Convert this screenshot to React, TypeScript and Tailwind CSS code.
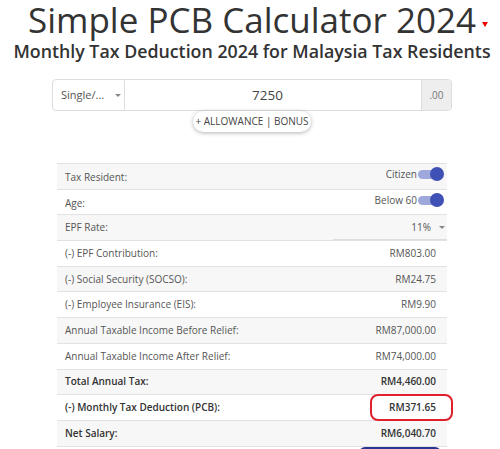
import React from "react";

type Row = {
  label: string;
  value?: string;
  kind?: "toggle" | "select" | "plain";
  bold?: boolean;
  boxed?: boolean;
};

const rows: Row[] = [
  { label: "Tax Resident:", value: "Citizen", kind: "toggle" },
  { label: "Age:", value: "Below 60", kind: "toggle" },
  { label: "EPF Rate:", value: "11%", kind: "select" },
  { label: "(-) EPF Contribution:", value: "RM803.00" },
  { label: "(-) Social Security (SOCSO):", value: "RM24.75" },
  { label: "(-) Employee Insurance (EIS):", value: "RM9.90" },
  { label: "Annual Taxable Income Before Relief:", value: "RM87,000.00" },
  { label: "Annual Taxable Income After Relief:", value: "RM74,000.00" },
  { label: "Total Annual Tax:", value: "RM4,460.00", bold: true },
  { label: "(-) Monthly Tax Deduction (PCB):", value: "RM371.65", bold: true, boxed: true },
  { label: "Net Salary:", value: "RM6,040.70", bold: true },
];

function Toggle() {
  return (
    <span className="relative ml-[1px] inline-flex h-[14px] w-[26px] items-center">
      <span className="h-[9px] w-[22px] rounded-full bg-[#9fa8da]" />
      <span className="absolute right-0 top-0 h-[14px] w-[14px] rounded-full bg-[#3f51b5]" />
    </span>
  );
}

export default function App() {
  return (
    <div
      className="w-[500px] h-[449px] overflow-hidden bg-white pl-[4px] text-[#333]"
      style={{ fontFamily: '"Open Sans", "Liberation Sans", sans-serif' }}
    >
      {/* Heading */}
      <div className="relative mx-auto w-fit">
        <h1 className="text-[35px] leading-[40px] text-[#333]">Simple PCB Calculator 2024</h1>
        <span className="absolute right-[-12px] top-[22px] h-0 w-0 border-x-[3px] border-t-[5px] border-x-transparent border-t-[#e00]" />
      </div>
      <h2 className="text-center text-[17.8px] font-semibold leading-[22px] text-[#333]">
        Monthly Tax Deduction 2024 for Malaysia Tax Residents
      </h2>

      {/* Salary input */}
      <div className="mx-auto mt-[17px] flex h-[32px] w-[400px] rounded-[4px] border border-[#ddd] text-[#555]">
        <div className="flex w-[72px] items-center border-r border-[#ddd] pl-[8px] text-[11px]">
          <span>Single/...</span>
          <span className="ml-[11px] h-0 w-0 border-x-[3px] border-t-[3px] border-x-transparent border-t-[#888]" />
        </div>
        <div className="flex flex-1 items-center justify-center pr-[11px] text-[13.5px] text-[#444]">7250</div>
        <div className="flex w-[30px] items-center justify-center rounded-r-[4px] border-l border-[#ddd] bg-[#eee] text-[10px] text-[#777]">
          .00
        </div>
      </div>
      <div className="flex justify-center">
        <button className="h-[21px] w-[118px] rounded-full bg-white text-[10px] text-[#444] shadow-[0_1px_4px_rgba(0,0,0,0.3)]">
          + ALLOWANCE | BONUS
        </button>
      </div>

      {/* Results */}
      <div className="mx-auto mt-[31px] w-[390px] text-[10px] text-[#555]">
        {rows.map((r, i) => (
          <div
            key={r.label}
            className={`flex h-[25.7px] items-center justify-between border-t border-[#e2e2e2] pl-[8px] pr-[11px] ${
              i % 2 === 0 ? "bg-[#f7f7f7]" : "bg-white"
            } ${r.bold ? "font-semibold text-[#333]" : ""}`}
          >
            <span className={r.kind === "toggle" ? "pt-[3px]" : ""}>{r.label}</span>
            {r.kind === "toggle" ? (
              <span className="mr-[-8px] flex items-center pb-[4px]">
                <span>{r.value}</span>
                <Toggle />
              </span>
            ) : r.kind === "select" ? (
              <span className="relative mr-[-11px] flex h-full w-[114px] items-center justify-end border-b border-[#ddd] pr-[16px]">
                <span>{r.value}</span>
                <span className="absolute right-[2px] top-[11px] h-0 w-0 border-x-[3px] border-t-[3px] border-x-transparent border-t-[#888]" />
              </span>
            ) : r.boxed ? (
              <span className="relative">
                {r.value}
                <span className="absolute left-[-19px] right-[-17px] top-[-6px] bottom-[-6px] rounded-[8px] border-2 border-[#e0202a]" />
              </span>
            ) : (
              <span>{r.value}</span>
            )}
          </div>
        ))}
        <div className="flex justify-end border-t border-[#e2e2e2] pr-[6px]">
          <div className="h-[30px] w-[82px] rounded-[6px] bg-[#283593]" />
        </div>
      </div>
    </div>
  );
}
